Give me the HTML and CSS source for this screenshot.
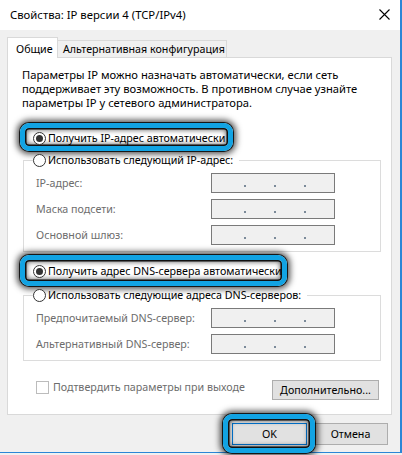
FILE: index.html
```html
<!DOCTYPE html>
<html lang="ru">
<head>
<meta charset="utf-8">
<title>Свойства: IP версии 4 (TCP/IPv4)</title>
<link rel="stylesheet" href="styles.css">
</head>
<body>
<div class="window">
  <div class="titlebar">
    <span class="title">Свойства: IP версии 4 (TCP/IPv4)</span>
    <svg class="close" width="11" height="11" viewBox="0 0 11 11"><path d="M0.5 0.5 L10.5 10.5 M10.5 0.5 L0.5 10.5" stroke="#000" stroke-width="1.1" fill="none"/></svg>
  </div>
  <div class="body">
    <div class="tabs">
      <div class="tab active">Общие</div>
      <div class="tab">Альтернативная конфигурация</div>
    </div>
    <div class="panel">
      <p class="intro">Параметры IP можно назначать автоматически, если сеть<br>поддерживает эту возможность. В противном случае узнайте<br>параметры IP у сетевого администратора.</p>

      <div class="option first-opt">
        <span class="hl hl-ip"></span>
        <span class="radio checked"></span><span>Получить IP-адрес автоматически</span>
      </div>

      <fieldset class="group ip-group">
        <legend><span class="radio"></span><span>Использовать следующий IP-адрес:</span></legend>
        <div class="field"><span class="label">IP-адрес:</span><span class="ip"><i></i><i></i><i></i></span></div>
        <div class="field"><span class="label">Маска подсети:</span><span class="ip"><i></i><i></i><i></i></span></div>
        <div class="field"><span class="label">Основной шлюз:</span><span class="ip"><i></i><i></i><i></i></span></div>
      </fieldset>

      <div class="option dns-opt">
        <span class="hl hl-dns"></span>
        <span class="radio checked"></span><span>Получить адрес DNS-сервера автоматически</span>
      </div>

      <fieldset class="group dns-group">
        <legend><span class="radio"></span><span>Использовать следующие адреса DNS-серверов:</span></legend>
        <div class="field"><span class="label">Предпочитаемый DNS-сервер:</span><span class="ip"><i></i><i></i><i></i></span></div>
        <div class="field"><span class="label">Альтернативный DNS-сервер:</span><span class="ip"><i></i><i></i><i></i></span></div>
      </fieldset>

      <div class="bottom-row">
        <div class="check-row"><span class="checkbox"></span><span>Подтвердить параметры при выходе</span></div>
        <div class="btn adv">Дополнительно...</div>
      </div>
    </div>
    <div class="buttons">
      <div class="btn ok">OK<span class="hl hl-ok"></span></div>
      <div class="btn cancel">Отмена</div>
    </div>
  </div>
</div>
</body>
</html>
```

FILE: styles.css
```css
* { box-sizing: border-box; }
html, body { margin: 0; padding: 0; }
body {
  width: 402px;
  height: 455px;
  background: #f0f0f0;
  font-family: "Noto Sans", "Open Sans", sans-serif;
  font-size: 10.7px;
  color: #000;
  overflow: hidden;
  white-space: nowrap;
}
.window {
  width: 402px;
  height: 453px;
  border-right: 2px solid #2b86d6;
  border-bottom: 1px solid #2b86d6;
  background: #f0f0f0;
}
.titlebar {
  height: 30px;
  background: #fff;
  display: flex;
  align-items: center;
  justify-content: space-between;
  padding: 0 10px 1px 10px;
}
.title { line-height: 16px; font-size: 11.3px; }
.close { display: block; }

.body { padding: 7px 6px 0 7px; }

.tabs {
  display: flex;
  align-items: flex-end;
  margin-bottom: -1px;
  position: relative;
  z-index: 1;
}
.tab {
  line-height: 16px;
}
.tab.active {
  height: 21px;
  padding: 3px 7px 0 8px;
  background: #fff;
  border: 1px solid #d9d9d9;
  border-bottom: none;
  width: 51px;
}
.tab:not(.active) {
  height: 17px;
  margin-bottom: 1px;
  padding: 0 4px 0 5px;
  background: #f0f0f0;
  border: 1px solid #d9d9d9;
  border-left: none;
  border-bottom: none;
  width: 169px;
}

.panel {
  width: 385px;
  height: 358px;
  background: #fff;
  border: 1px solid #d9d9d9;
  padding: 10px 11px 0 15px;
}
.intro {
  margin: 0 0 0 -1px;
  line-height: 14px;
  font-size: 11.2px;
}

.option {
  position: relative;
  display: flex;
  align-items: center;
  height: 16px;
  padding-left: 10px;
  line-height: 16px;
}
.first-opt { margin-top: 20px; }
.dns-opt { margin-top: 11px; }

.radio {
  width: 13px;
  height: 13px;
  border: 1px solid #333;
  border-radius: 50%;
  background: #fff;
  display: inline-flex;
  align-items: center;
  justify-content: center;
  margin-right: 2px;
  flex: none;
  position: relative;
  z-index: 2;
}
.radio.checked::after {
  content: "";
  width: 7px;
  height: 7px;
  border-radius: 50%;
  background: #333;
}
.option > span:last-child { position: relative; z-index: 2; }

.hl {
  position: absolute;
  border: 5px solid #12a3e3;
  border-radius: 9px;
  box-shadow: inset 0 0 0 1.5px #111, inset 0 0 5px 2px rgba(0,0,0,0.6), 0 0 0 1px rgba(0,0,0,0.8), 0 0 6px 3px rgba(0,0,0,0.7);
  z-index: 1;
  pointer-events: none;
}
.hl-ip { left: -3px; top: -7px; width: 213px; height: 28px; }
.hl-dns { left: -3px; top: -8px; width: 267px; height: 31px; }
.hl-ok { left: -10px; top: -10px; width: 92px; height: 39px; }

.group {
  margin: 6px 0 0 0;
  width: 358px;
  border: 1px solid #dcdcdc;
  padding: 5px 10px 6px 9px;
  min-width: 0;
}
.dns-group { margin-top: 8px; }
.group legend {
  display: flex;
  align-items: center;
  padding: 0 6px 0 0;
  height: 16px;
  line-height: 16px;
}
.field {
  display: flex;
  align-items: center;
  justify-content: space-between;
  height: 20px;
  margin-top: 6px;
  padding-left: 3px;
  padding-right: 35px;
}
.field:first-of-type { margin-top: 0; }
.label { color: #6d6d6d; }
.ip {
  width: 124px;
  height: 20px;
  border: 1px solid #7a7a7a;
  background: #f0f0f0;
  display: flex;
  align-items: flex-end;
  padding: 0 0 5px 32px;
  gap: 28px;
  flex: none;
}
.ip i {
  display: block;
  width: 2px;
  height: 2px;
  background: #7b8a99;
}

.bottom-row {
  margin-top: 19px;
  display: flex;
  justify-content: space-between;
  align-items: flex-start;
  padding-right: 1px;
}
.check-row {
  display: flex;
  align-items: center;
  padding-left: 13px;
  color: #6d6d6d;
  line-height: 14px;
}
.checkbox {
  width: 13px;
  height: 13px;
  border: 1px solid #bcbcbc;
  background: #fff;
  margin-right: 4px;
}
.btn {
  background: #e1e1e1;
  border: 1px solid #adadad;
  display: flex;
  align-items: center;
  justify-content: center;
  position: relative;
}
.btn.adv { width: 107px; height: 20px; }

.buttons {
  display: flex;
  justify-content: flex-end;
  gap: 6px;
  padding-top: 8px;
  padding-right: 6px;
}
.buttons .btn { width: 75px; height: 22px; }
.btn.ok { border: 1px solid #0078d7; }
```
